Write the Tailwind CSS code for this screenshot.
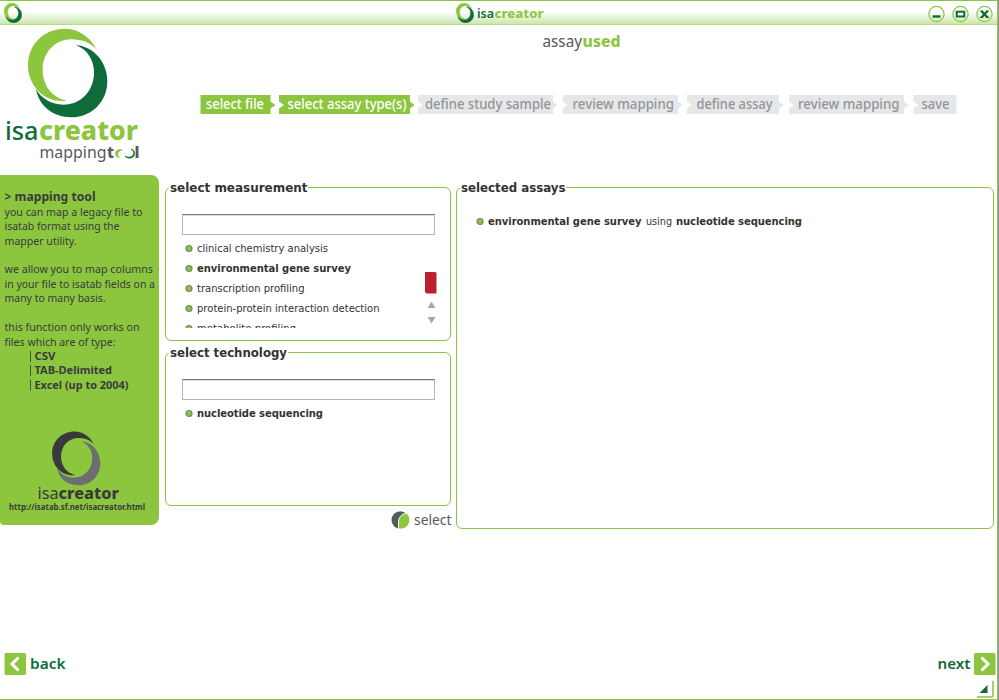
<!DOCTYPE html>
<html lang="en">
<head>
<meta charset="utf-8">
<title>isacreator</title>
<script src="https://cdn.jsdelivr.net/npm/@tailwindcss/browser@4"></script>
</head>
<body class="h-[700px] w-[999px] overflow-hidden bg-white">
<svg class="hidden">
  <defs>
    <path id="ringA" d="M291 150C270 108 232 86 195 86C130 86 84 135 84 195C84 255 130 310 200 302C155 292 128 255 128 210C128 157 165 118 215 118C245 118 272 128 291 150Z"/>
    <path id="ringB" d="M227 135C285 140 322 190 322 243C322 305 275 352 215 352C160 352 118 320 108 268C125 297 155 314 190 314C245 314 282 270 282 218C282 180 262 148 227 135Z"/>
  </defs>
</svg>
<div class="flex h-[700px] w-[999px] bg-[#8f9499]">
<div class="flex h-[700px] w-[998px] flex-col border-t border-r border-b border-[#8cc63f] bg-white font-['Noto_Sans',sans-serif]">
  <header class="flex h-6 shrink-0 justify-between border-b border-[#b5da83] bg-linear-to-b from-white from-45% to-[#cde6ab]">
    <svg class="ml-1 mt-[2px] h-5 w-[18px]" viewBox="80 81 248 276" preserveAspectRatio="none"><use href="#ringA" fill="#8cc63f" stroke="#8cc63f" stroke-width="8"/><use href="#ringB" fill="#0e6b3a" stroke="#0e6b3a" stroke-width="8"/></svg>
    <div class="ml-[54px] flex">
      <svg class="mt-[2px] h-5 w-[18px]" viewBox="80 81 248 276" preserveAspectRatio="none"><use href="#ringA" fill="#8cc63f" stroke="#8cc63f" stroke-width="8"/><use href="#ringB" fill="#0e6b3a" stroke="#0e6b3a" stroke-width="8"/></svg>
      <svg class="h-6 w-[72px]" font-size="13"><text x="3" y="17" textLength="17" lengthAdjust="spacingAndGlyphs" font-weight="600" fill="#0e6b3a">isa</text><text x="20.500" y="17" textLength="49" lengthAdjust="spacingAndGlyphs" font-weight="800" fill="#8cc63f">creator</text></svg>
    </div>
    <svg class="h-6 w-[72px]" fill="none" stroke="#8cc63f" stroke-width="1.2">
      <circle cx="11.500" cy="13" r="7.600"/><circle cx="35.500" cy="13" r="7.600"/><circle cx="59.500" cy="13" r="7.600"/>
      <path d="M7.500 15.500h8" stroke="#0e6b3a" stroke-width="2.400"/>
      <rect x="31.700" y="10.700" width="7.600" height="4.800" stroke="#0e6b3a" stroke-width="2"/>
      <path d="M56.500 10l6 6.500M62.500 10l-6 6.500" stroke="#0e6b3a" stroke-width="2.400"/><path d="M55 10h3M61 10h3M55 16.300h3M61 16.300h3" stroke="#0e6b3a" stroke-width="1.200"/>
    </svg>
  </header>

  <main class="flex h-[628px] shrink-0">
    <aside class="w-[159px] shrink-0">
      <svg class="h-[150px] w-[159px]" viewBox="0 25 159 150">
        <g transform="scale(.33333)"><use href="#ringA" fill="#8cc63f"/><use href="#ringB" fill="#0e6b3a"/></g>
        <text x="5" y="140" font-size="26" font-weight="500" fill="#0e6b3a" textLength="33.500" lengthAdjust="spacingAndGlyphs">isa</text>
        <text x="39" y="140" font-size="26" font-weight="800" fill="#8cc63f" textLength="99" lengthAdjust="spacingAndGlyphs">creator</text>
        <text x="39.500" y="158" font-size="16.500" fill="#58595b" textLength="67" lengthAdjust="spacingAndGlyphs">mapping</text>
        <text x="107" y="158" font-size="16.500" font-weight="800" fill="#58595b" textLength="7" lengthAdjust="spacingAndGlyphs">t</text>
        <path d="M124 150.500C119 147.500 114.500 150.500 115.300 154.500C115.800 157 118 158.300 120.500 157.700C118.300 157 117.600 155 118.500 153C119.500 151 121.500 150 124 150.500Z" fill="#8cc63f"/>
        <path d="M131 149C135 151 134.500 156 130 157C128 157.400 126.200 157 125 156C127 159 133 159 134.300 155C135 152 133.500 149.500 131 149Z" fill="#0e6b3a" stroke="#0e6b3a" stroke-width=".7"/>
        <text x="134.500" y="158" font-size="16.500" font-weight="800" fill="#58595b" textLength="5" lengthAdjust="spacingAndGlyphs">l</text>
      </svg>
      <div class="h-[350px] w-[159px] rounded-r-lg rounded-bl-sm bg-[#8cc63f]">
        <svg class="h-[350px] w-[159px]" viewBox="0 175 159 350" font-size="11.200" fill="#3a3a3c">
          <text x="4.500" y="201" font-size="12" font-weight="700" textLength="91" lengthAdjust="spacingAndGlyphs">&gt; mapping tool</text>
          <text x="4.500" y="216" textLength="138" lengthAdjust="spacingAndGlyphs">you can map a legacy file to</text>
          <text x="4.500" y="230" textLength="115" lengthAdjust="spacingAndGlyphs">isatab format using the</text>
          <text x="4.500" y="244.500" textLength="72" lengthAdjust="spacingAndGlyphs">mapper utility.</text>
          <text x="4.500" y="273" textLength="148.500" lengthAdjust="spacingAndGlyphs">we allow you to map columns</text>
          <text x="4.500" y="288" textLength="150.500" lengthAdjust="spacingAndGlyphs">in your file to isatab fields on a</text>
          <text x="4.500" y="302" textLength="101" lengthAdjust="spacingAndGlyphs">many to many basis.</text>
          <text x="4.500" y="331" textLength="135" lengthAdjust="spacingAndGlyphs">this function only works on</text>
          <text x="4.500" y="345.500" textLength="111" lengthAdjust="spacingAndGlyphs">files which are of type:</text>
          <path d="M30.500 351v11M30.500 365v11M30.500 379.500v11" stroke="#3a3a3c" stroke-width=".8"/>
          <g font-weight="700">
            <text x="34.500" y="360" textLength="21" lengthAdjust="spacingAndGlyphs">CSV</text>
            <text x="34.500" y="374" textLength="77.500" lengthAdjust="spacingAndGlyphs">TAB-Delimited</text>
            <text x="34.500" y="388.500" textLength="94" lengthAdjust="spacingAndGlyphs">Excel (up to 2004)</text>
          </g>
          <g transform="translate(35.100 414) scale(.2025)"><use href="#ringA"/><use href="#ringB" fill="#6d6e71"/></g>
          <text x="37.500" y="499" font-size="15.500" textLength="21" lengthAdjust="spacingAndGlyphs">isa</text>
          <text x="58.500" y="499" font-size="15.500" font-weight="800" textLength="60.500" lengthAdjust="spacingAndGlyphs">creator</text>
          <text x="9" y="510" font-size="8" font-weight="700" textLength="136" lengthAdjust="spacingAndGlyphs">http://isatab.sf.net/isacreator.html</text>
        </svg>
      </div>
    </aside>

    <section class="flex w-[838px] flex-col">
      <svg class="ml-[381px] h-[30px] w-[84px]" font-size="16"><text x="2.500" y="22" textLength="39.500" lengthAdjust="spacingAndGlyphs" fill="#58595b">assay</text><text x="42.500" y="22" font-weight="800" textLength="38" lengthAdjust="spacingAndGlyphs" fill="#8cc63f">used</text></svg>
      <nav class="ml-[41px] mt-10 flex h-[19px] text-[13.5px] font-medium">
        <svg class="h-[19px] w-[79px]"><path d="M0.500 0H70.500V6.500L75.500 10L70.500 13.500V19H.5Z" fill="#8cc63f"/><text x="6" y="14" fill="#fff" textLength="58" lengthAdjust="spacingAndGlyphs">select file</text></svg>
        <svg class="h-[19px] w-[139px]"><path d="M0 0H131V6.500L135.500 10L131 13.500V19H0V13.500L5 10L0 6.500Z" fill="#8cc63f"/><text x="8.500" y="14" fill="#fff" textLength="119" lengthAdjust="spacingAndGlyphs">select assay type(s)</text></svg>
        <svg class="h-[19px] w-[144px]"><path d="M0 0H135V6.500L139.500 10L135 13.500V19H0V13.500L5 10L0 6.500Z" fill="#e6e7e8"/><text x="7" y="14" fill="#939598" textLength="126" lengthAdjust="spacingAndGlyphs">define study sample</text></svg>
        <svg class="h-[19px] w-[125px]"><path d="M.7 0H116V6.500L120.500 10L116 13.500V19H.7V13.500L5.700 10L.7 6.500Z" fill="#e6e7e8"/><text x="10.500" y="14" fill="#939598" textLength="101.500" lengthAdjust="spacingAndGlyphs">review mapping</text></svg>
        <svg class="h-[19px] w-[102px]"><path d="M0 0H92V6.500L97 10L92 13.500V19H0V13.500L5 10L0 6.500Z" fill="#e6e7e8"/><text x="9.500" y="14" fill="#939598" textLength="76" lengthAdjust="spacingAndGlyphs">define assay</text></svg>
        <svg class="h-[19px] w-[124px]"><path d="M0 0H115V6.500L119.500 10L115 13.500V19H0V13.500L5 10L0 6.500Z" fill="#e6e7e8"/><text x="9" y="14" fill="#939598" textLength="101.500" lengthAdjust="spacingAndGlyphs">review mapping</text></svg>
        <svg class="h-[19px] w-[44px]"><path d="M.5 0H43.500V19H.5V13.500L5.500 10L.5 6.500Z" fill="#e6e7e8"/><text x="8.500" y="14" fill="#939598" textLength="28" lengthAdjust="spacingAndGlyphs">save</text></svg>
      </nav>

      <div class="ml-[6px] mt-[73px] flex gap-[5px] font-['DejaVu_Sans',sans-serif] text-[10px] text-[#333]">
        <div class="w-[286px]">
          <div class="relative h-[154px] rounded-md border border-[#8cc63f] pl-4 pt-[26px]">
            <svg class="absolute left-[3px] -top-2 h-4 w-[139px] bg-white"><text x="1" y="12" font-size="12" font-weight="700" fill="#333" textLength="137.500" lengthAdjust="spacingAndGlyphs">select measurement</text></svg>
            <div class="h-[21px] w-[253px] border border-[#b5b5b5] border-t-[#77797b] shadow-[inset_0_1px_0_#dcdcdc]"></div>
            <div class="flex">
              <svg class="h-[93px] w-[236px]" font-size="10" fill="#333">
                <g fill="#8cc63f" stroke="#77836d" stroke-width="1.200"><circle cx="7" cy="13.500" r="3"/><circle cx="7" cy="33.500" r="3"/><circle cx="7" cy="53.500" r="3"/><circle cx="7" cy="73.500" r="3"/><circle cx="7" cy="93.500" r="3"/></g>
                <text x="15" y="17" textLength="131" lengthAdjust="spacing">clinical chemistry analysis</text>
                <text x="15" y="37" font-weight="700" textLength="154" lengthAdjust="spacing">environmental gene survey</text>
                <text x="15" y="57" textLength="107.500" lengthAdjust="spacing">transcription profiling</text>
                <text x="15" y="77" textLength="182.500" lengthAdjust="spacing">protein-protein interaction detection</text>
                <text x="15" y="97" textLength="99" lengthAdjust="spacing">metabolite profiling</text>
              </svg>
              <svg class="h-[93px] w-5"><path d="M7 37H17.500L18.500 38.500V58.500H8.500L7 57Z" fill="#be1e2d"/><path d="M9.500 73h8l-4-6.500ZM9.500 82h8l-4 6.500Z" fill="#a7a9ac"/></svg>
            </div>
          </div>
          <div class="relative mt-[11px] h-[154px] rounded-md border border-[#8cc63f] pl-4 pt-[26px]">
            <svg class="absolute left-[3px] -top-2 h-4 w-[119px] bg-white"><text x="1" y="12" font-size="12" font-weight="700" fill="#333" textLength="117" lengthAdjust="spacingAndGlyphs">select technology</text></svg>
            <div class="h-[21px] w-[253px] border border-[#b5b5b5] border-t-[#77797b] shadow-[inset_0_1px_0_#dcdcdc]"></div>
            <svg class="h-[40px] w-[236px]" font-size="10" fill="#333"><circle cx="7" cy="13.500" r="3" fill="#8cc63f" stroke="#77836d" stroke-width="1.200"/><text x="15" y="17" font-weight="700" textLength="126" lengthAdjust="spacing">nucleotide sequencing</text></svg>
          </div>
          <svg class="ml-[226px] mt-[4px] h-5 w-[62px] font-['Noto_Sans',sans-serif]">
            <circle cx="9.300" cy="10" r="8.800" fill="#58595b"/>
            <path d="M7.500 19V13C7.500 7 10.500 3.500 16 3.500C20 7 19.500 13 16 16.500C14 18.500 11 19.500 7.500 19Z" fill="#8cc63f" stroke="#fff"/>
            <text x="23" y="15" font-size="15" fill="#58595b" textLength="37.500" lengthAdjust="spacingAndGlyphs">select</text>
          </svg>
        </div>
        <div class="relative h-[342px] w-[538px] rounded-md border border-[#8cc63f] pl-4 pt-[20px]">
          <svg class="absolute left-[3px] -top-2 h-4 w-[106px] bg-white"><text x="1" y="12" font-size="12" font-weight="700" fill="#333" textLength="104.500" lengthAdjust="spacingAndGlyphs">selected assays</text></svg>
          <svg class="h-[30px] w-[350px]" font-size="10" fill="#333"><circle cx="7" cy="13.500" r="3" fill="#8cc63f" stroke="#77836d" stroke-width="1.200"/>
            <text x="15" y="17" font-weight="700" textLength="153.500" lengthAdjust="spacing">environmental gene survey</text>
            <text x="173" y="17" textLength="26" lengthAdjust="spacingAndGlyphs">using</text>
            <text x="203" y="17" font-weight="700" textLength="126" lengthAdjust="spacing">nucleotide sequencing</text></svg>
        </div>
      </div>
    </section>
  </main>

  <footer class="flex h-[46px] shrink-0 justify-between">
    <svg class="ml-1 h-6 w-[64px]"><rect x=".5" y="0" width="21.500" height="22" rx="1.500" fill="#8cc63f"/><path d="M14.500 4.500L8 11L14.500 17.500" fill="none" stroke="#fff" stroke-width="3"/><text x="26" y="16" font-size="15" font-weight="600" fill="#0e6b3a" textLength="35.500" lengthAdjust="spacingAndGlyphs">back</text></svg>
    <svg class="h-[46px] w-[62px]"><text x="2.500" y="16" font-size="15" font-weight="600" fill="#0e6b3a" textLength="33" lengthAdjust="spacingAndGlyphs">next</text><rect x="39" y="0" width="21.500" height="22" rx="1.500" fill="#8cc63f"/><path d="M46.500 4.500L53 11L46.500 17.500" fill="none" stroke="#fff" stroke-width="3"/><path d="M52.500 32V40H44.500Z" fill="#0e6b3a"/><path d="M58 28V42.500Q58 44 56.500 44H42" fill="none" stroke="#8cc63f" stroke-width="1.600"/></svg>
  </footer>
</div>
</div>
</body>
</html>
